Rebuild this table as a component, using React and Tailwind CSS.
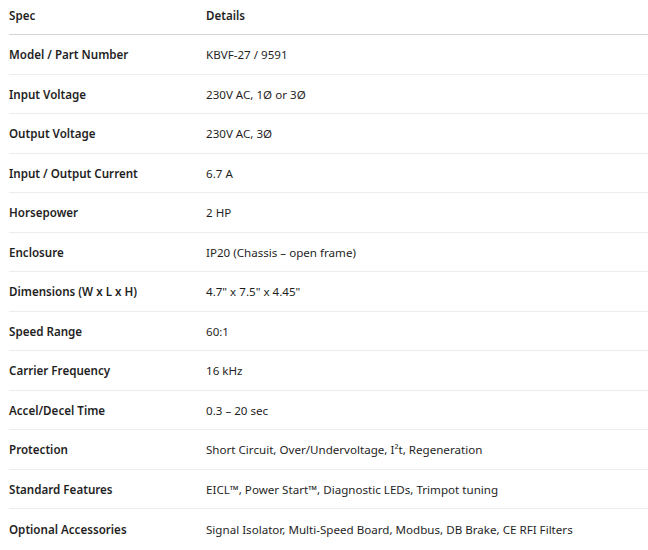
import React from "react";

const specs = [
  ["Model / Part Number", "KBVF-27 / 9591"],
  ["Input Voltage", "230V AC, 1Ø or 3Ø"],
  ["Output Voltage", "230V AC, 3Ø"],
  ["Input / Output Current", "6.7 A"],
  ["Horsepower", "2 HP"],
  ["Enclosure", "IP20 (Chassis – open frame)"],
  ["Dimensions (W x L x H)", "4.7\" x 7.5\" x 4.45\""],
  ["Speed Range", "60:1"],
  ["Carrier Frequency", "16 kHz"],
  ["Accel/Decel Time", "0.3 – 20 sec"],
  ["Protection", "Short Circuit, Over/Undervoltage, I²t, Regeneration"],
  ["Standard Features", "EICL™, Power Start™, Diagnostic LEDs, Trimpot tuning"],
  ["Optional Accessories", "Signal Isolator, Multi-Speed Board, Modbus, DB Brake, CE RFI Filters"],
];

const App = () => {
  return (
    <div
      className="min-h-screen bg-white pl-[9px] text-[11.6px] text-[#1f1f1f]"
      style={{ fontFamily: '"Noto Sans", "Open Sans", sans-serif' }}
    >
      <div className="grid grid-cols-[197px_1fr] h-[35px] items-center pb-[2px] border-b border-[#d4d4d4] font-semibold">
        <div>Spec</div>
        <div>Details</div>
      </div>

      {specs.map(([label, value], i) => (
        <div
          key={label}
          className={`grid grid-cols-[197px_1fr] h-[39.5px] items-center pt-[1px] ${
            i < specs.length - 1 ? "border-b border-[#ececec]" : ""
          }`}
        >
          <div className="font-semibold">{label}</div>
          <div>{value}</div>
        </div>
      ))}
    </div>
  );
};

export default App;
